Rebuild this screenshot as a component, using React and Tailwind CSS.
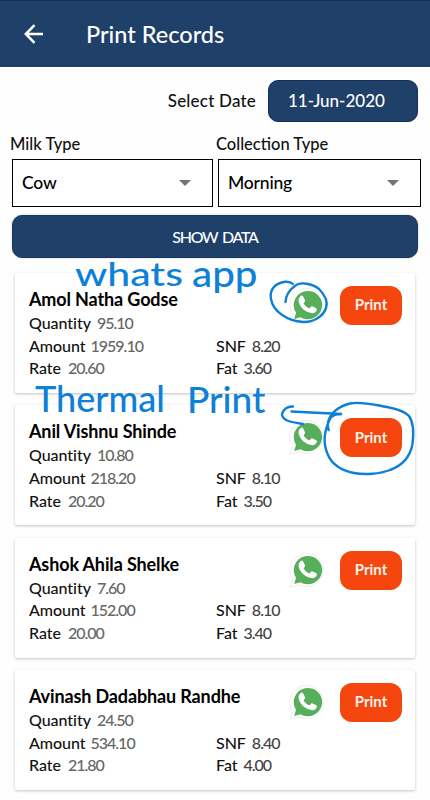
import { useState } from 'react';
import clsx from 'clsx';

const records = [
  { id: 1, name: 'Amol Natha Godse', quantity: '95.10', amount: '1959.10', rate: '20.60', snf: '8.20', fat: '3.60' },
  { id: 2, name: 'Anil Vishnu Shinde', quantity: '10.80', amount: '218.20', rate: '20.20', snf: '8.10', fat: '3.50' },
  { id: 3, name: 'Ashok Ahila Shelke', quantity: '7.60', amount: '152.00', rate: '20.00', snf: '8.10', fat: '3.40' },
  { id: 4, name: 'Avinash Dadabhau Randhe', quantity: '24.50', amount: '534.10', rate: '21.80', snf: '8.40', fat: '4.00' },
];

const BackIcon = () => (
  <svg width="20" height="20" viewBox="0 0 20 20" fill="none" stroke="#fff" strokeWidth="2.5">
    <path d="M19 10H2M10.5 1.2 1.8 10l8.7 8.8" />
  </svg>
);

const WhatsAppIcon = () => (
  <svg width="36" height="38" viewBox="0 0 36 38">
    <path d="M1 36.5 3.4 28A16.7 16.7 0 1 1 9.8 33.8Z" fill="#fff" stroke="#e6e8e6" strokeWidth="0.8" />
    <path d="M5.2 33 7 26.8A14.2 14.2 0 1 1 11.5 31.2Z" fill="#57ae5b" />
    <path d="M11.4 10.2c.8-.9 2.2-.8 2.8.3l1.7 3.4c.4.8.2 1.4-.4 2l-1 1.3c1.1 2.2 3.3 4.2 5.7 5.2l1.5-1.5c.6-.6 1.2-.7 1.9-.3l3.3 1.5c1 .5 1.1 1.1.8 2.1-.8 2.2-3 3.3-5.2 2.9-6.3-1-11.500-5.7-12.800-11.300-.4-2.2.2-4.2 1.7-5.6Z" fill="#fff" />
  </svg>
);

const Field = ({ label, value, valueClass }) => (
  <p className="flex text-base leading-[22.7px] tracking-[-0.05px] text-[#111]">
    <span>{label}</span>
    <span className={clsx('tracking-[-1px]', valueClass)}>{value}</span>
  </p>
);

const SelectBox = ({ label, options, className }) => {
  const [value, setValue] = useState(options[0]);
  const next = () => setValue(options[(options.indexOf(value) + 1) % options.length]);
  return (
    <div className={className}>
      <p className="-ml-[2px] h-[25px] text-[16.5px] leading-5 text-[#111]">{label}</p>
      <button onClick={next} className="flex h-12 w-full items-center justify-between border border-black bg-white pr-[21px] pl-[9px] text-left text-[17.5px] tracking-[-0.2px] text-black">
        <span>{value}</span>
        <svg width="12" height="6" viewBox="0 0 12 6" fill="#757575"><path d="M0 0h12L6 6Z" /></svg>
      </button>
    </div>
  );
};

const RecordCard = ({ record }) => (
  <li className="flex h-[120px] rounded-[2px] bg-white pt-[14px] pl-3.5 shadow-[0_1px_3px_rgba(0,0,0,0.24)]">
    <div className="w-[187px] shrink-0">
      <h2 className="h-[25px] text-[18px] leading-6 font-bold tracking-[-0.13px] whitespace-nowrap text-black">{record.name}</h2>
      <Field label="Quantity" value={record.quantity} valueClass="ml-[6px] text-[#666]" />
      <Field label="Amount" value={record.amount} valueClass="ml-[5px] text-[#666]" />
      <Field label="Rate" value={record.rate} valueClass="ml-[7px] text-[#666]" />
    </div>
    <div className="flex-1">
      <div className="flex h-[47.7px] items-start">
        <span className="-mt-[1px] ml-[73px]"><WhatsAppIcon /></span>
        <button className="-mt-[1px] ml-[15px] h-[39px] w-[62px] rounded-xl bg-[#f6460f] pb-0.5 text-[15px] font-bold text-[#fff3ea]">Print</button>
      </div>
      <Field label="SNF" value={record.snf} valueClass="ml-[6px] text-[#444]" />
      <Field label="Fat" value={record.fat} valueClass="ml-[6px] text-[#444]" />
    </div>
  </li>
);

// Pen marks and handwritten notes on top of the screen
const Annotations = () => (
  <div className="pointer-events-none absolute inset-0 font-['Lato',sans-serif] leading-7 font-medium text-[#0d80d8]">
    <span className="absolute top-[259px] left-[75px] origin-left scale-x-[1.24] text-[33px]">whats</span>
    <span className="absolute top-[259px] left-[192px] origin-left scale-x-[1.12] text-[36px]">app</span>
    <span className="absolute top-[384px] left-[35px] text-[36px]">Thermal</span>
    <span className="absolute top-[385px] left-[187px] text-[37px]">Print</span>
    <svg className="absolute inset-0" width="430" height="800" viewBox="0 0 430 800" fill="none" stroke="#0d7fd6" strokeWidth="2.4" strokeLinecap="round" strokeLinejoin="round">
      <path d="M285.5 302C286 295 289 290 295 286C300 281 313 284 319 289C325 295 328 302 326 308C323 317 313 322.5 303 322C288 321 273 312 271 299C269 289 276 283 285 281.8C289 281.5 291 282 293 284" />
      <path d="M341 414 291.5 411.5M293 406.5C288 406 283 409 282 414C282 420 289 422 303 424" />
      <path d="M341 414C335 414 331 416 329 420C327 424 328 428 328.7 430M328 422C331 412 340 406 350 403.5C361 401 375 405 387 407C397 409 405 411 409 416C414 423 413.5 436 412.5 444C410 458 401 466 390 470C380 474 365 475 354 473C339 470 332 464 328 455C323 444 324 431 330 419" />
    </svg>
  </div>
);

export default function App() {
  return (
    <div className="relative h-[800px] w-[430px] overflow-hidden bg-[#fefefe] font-['Lato','Open_Sans',sans-serif] font-medium">
      <header className="flex h-[67px] items-center border-t border-[#16324f] bg-[#1f4068] pl-[24px]">
        <button aria-label="Back"><BackIcon /></button>
        <h1 className="ml-[42px] text-[23.5px] leading-7 text-white">Print Records</h1>
      </header>

      <div className="mt-[13px] flex h-[42px] items-center justify-end pr-3">
        <span className="mr-3 text-[17px] tracking-[0.2px] text-[#111]">Select Date</span>
        <button className="h-[42px] w-[150px] rounded-[10px] border border-[#12305a] bg-[#1f4068] pl-[19px] text-left text-[17px] text-white">11-Jun-2020</button>
      </div>

      <div className="mt-[12px] flex gap-[5px] pl-3">
        <SelectBox label="Milk Type" options={['Cow', 'Buffalo']} className="w-[201px]" />
        <SelectBox label="Collection Type" options={['Morning', 'Evening']} className="w-[203px]" />
      </div>

      <button className="mt-[8px] ml-3 block h-[43px] w-[406px] rounded-[10px] border border-[#183a61] bg-[#1f4068] text-base tracking-[-1.3px] [word-spacing:2px] text-white shadow-[0_0_2px_rgba(0,0,0,0.25)]">SHOW DATA</button>

      <ul className="mx-[15px] mt-[15px] flex flex-col gap-[12.3px]">
        {records.map((record) => <RecordCard key={record.id} record={record} />)}
      </ul>

      <Annotations />
    </div>
  );
}
